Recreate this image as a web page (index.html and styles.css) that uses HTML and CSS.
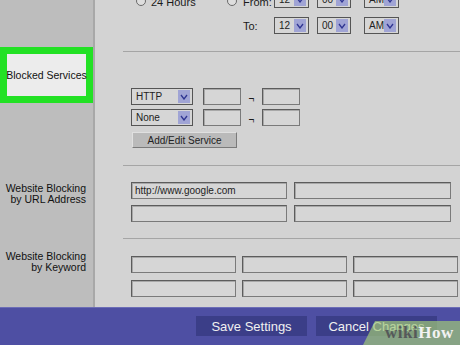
FILE: index.html
```html
<!DOCTYPE html>
<html lang="en">
<head>
  <meta charset="UTF-8" />
  <title>Access Restrictions</title>
  <link rel="stylesheet" href="styles.css">
</head>
<body>
  <div class="screen">
    <div class="content">
      <aside class="side">
        <div class="hl"><span>Blocked Services</span></div>
        <div class="lbl url">Website Blocking<br>by URL Address</div>
        <div class="lbl kw">Website Blocking<br>by Keyword</div>
      </aside>
      <main class="main">
        <section class="time">
          <div class="trow first">
            <span class="radio"></span>
            <span class="tl hours">24 Hours</span>
            <span class="radio"></span>
            <span class="tl from">From:</span>
            <div class="sel hh"><span>12</span><i class="dd"><svg width="8" height="6" viewBox="0 0 8 6"><polyline points="1,1 4,5 7,1" fill="none" stroke="#2f3591" stroke-width="1.3"/></svg></i></div>
            <div class="sel mm"><span>00</span><i class="dd"><svg width="8" height="6" viewBox="0 0 8 6"><polyline points="1,1 4,5 7,1" fill="none" stroke="#2f3591" stroke-width="1.3"/></svg></i></div>
            <div class="sel ap"><span>AM</span><i class="dd"><svg width="8" height="6" viewBox="0 0 8 6"><polyline points="1,1 4,5 7,1" fill="none" stroke="#2f3591" stroke-width="1.3"/></svg></i></div>
          </div>
          <div class="trow second">
            <span class="tl from">To:</span>
            <div class="sel hh"><span>12</span><i class="dd"><svg width="8" height="6" viewBox="0 0 8 6"><polyline points="1,1 4,5 7,1" fill="none" stroke="#2f3591" stroke-width="1.3"/></svg></i></div>
            <div class="sel mm"><span>00</span><i class="dd"><svg width="8" height="6" viewBox="0 0 8 6"><polyline points="1,1 4,5 7,1" fill="none" stroke="#2f3591" stroke-width="1.3"/></svg></i></div>
            <div class="sel ap"><span>AM</span><i class="dd"><svg width="8" height="6" viewBox="0 0 8 6"><polyline points="1,1 4,5 7,1" fill="none" stroke="#2f3591" stroke-width="1.3"/></svg></i></div>
          </div>
        </section>
        <div class="rule"></div>
        <section class="svc">
          <div class="srow">
            <div class="sel kind"><span>HTTP</span><i class="dd"><svg width="8" height="6" viewBox="0 0 8 6"><polyline points="1,1 4,5 7,1" fill="none" stroke="#2f3591" stroke-width="1.3"/></svg></i></div>
            <div class="box port"></div>
            <span class="sep">¬</span>
            <div class="box port2"></div>
          </div>
          <div class="srow">
            <div class="sel kind"><span>None</span><i class="dd"><svg width="8" height="6" viewBox="0 0 8 6"><polyline points="1,1 4,5 7,1" fill="none" stroke="#2f3591" stroke-width="1.3"/></svg></i></div>
            <div class="box port"></div>
            <span class="sep">¬</span>
            <div class="box port2"></div>
          </div>
          <button class="add">Add/Edit Service</button>
        </section>
        <div class="rule"></div>
        <section class="urls">
          <div class="box">http://www.google.com</div>
          <div class="box"></div>
          <div class="box"></div>
          <div class="box"></div>
        </section>
        <div class="rule"></div>
        <section class="kws">
          <div class="box"></div>
          <div class="box"></div>
          <div class="box"></div>
          <div class="box"></div>
          <div class="box"></div>
          <div class="box"></div>
        </section>
      </main>
    </div>
    <footer class="bar">
      <button class="btn save">Save Settings</button>
      <button class="btn cancel">Cancel Changes</button>
    </footer>
    <div class="wm"><span class="wiki">wiki</span><span class="how">How</span></div>
  </div>
</body>
</html>
```

FILE: styles.css
```css
* { box-sizing: border-box; }
html, body { height: 100%; margin: 0; }
body {
  font-family: "Liberation Sans", Arial, sans-serif;
  background: #d3d3d3;
  color: #1a1a1a;
  overflow: hidden;
}
.screen {
  width: 460px;
  height: 345px;
  display: flex;
  flex-direction: column;
  position: relative;
  overflow: hidden;
}
.content {
  display: flex;
  flex: 1;
  min-height: 0;
}
.side {
  width: 95px;
  background: #bdbdbd;
  border-right: 2px solid #a8a8a8;
  display: flex;
  flex-direction: column;
  font-size: 10.5px;
}
.hl {
  margin-top: 47px;
  height: 56px;
  border: 7px solid #22e124;
  background: #ececec;
  display: flex;
  align-items: center;
  justify-content: center;
  white-space: nowrap;
  color: #111;
}
.side .lbl {
  text-align: right;
  padding-right: 7px;
  line-height: 11px;
  color: #111;
}
.lbl.url { margin-top: 80px; }
.lbl.kw { margin-top: 46px; }

.main {
  flex: 1;
  display: flex;
  flex-direction: column;
  background: #d3d3d3;
}
.rule {
  height: 1px;
  background: #a5a5a5;
  margin-left: 28px;
}

/* time */
.time {
  margin-top: -9px;
  margin-bottom: 17px;
  display: flex;
  flex-direction: column;
  gap: 9px;
}
.trow {
  display: flex;
  align-items: center;
  height: 17px;
  font-size: 11px;
}
.trow.first { padding-left: 41px; }
.trow.first .tl { align-self: flex-end; line-height: 13px; margin-bottom: -1px; }
.trow.second { padding-left: 148px; }
.radio {
  width: 10px;
  height: 10px;
  border: 1px solid #6a6a6a;
  border-radius: 50%;
  background: #dedede;
  margin-top: 3px;
}
.tl.hours { margin-left: 5px; width: 76px; }
.radio + .tl.from { margin-left: 6px; }
.tl.from { width: 31px; }

.sel {
  display: flex;
  align-items: center;
  height: 17px;
  border: 1px solid #555;
  background: #d6d6d6;
  padding: 0 2px 0 4px;
  font-size: 10px;
  color: #222;
}
.sel span { flex: 1; }
.sel .dd {
  width: 12px;
  height: 13px;
  background: #a0a4d5;
  display: flex;
  align-items: center;
  justify-content: center;
}
.sel.hh { width: 35px; }
.sel.mm { width: 34px; margin-left: 8px; }
.sel.ap { width: 35px; margin-left: 13px; }

.box {
  height: 17px;
  border: 1px solid #5c5c5c;
  border-right-color: #7a7a7a;
  border-bottom-color: #7a7a7a;
  background: #d6d6d6;
  box-shadow: inset 1px 1px 0 #a8a8a8;
  font-size: 10px;
  color: #222;
  padding: 2px 3px;
  white-space: nowrap;
}

/* blocked services */
.svc {
  padding: 36px 0 0 36px;
  margin-bottom: 17px;
  display: flex;
  flex-direction: column;
  gap: 4px;
}
.srow {
  display: flex;
  align-items: center;
}
.sel.kind { width: 62px; }
.box.port { width: 38px; margin-left: 10px; }
.box.port2 { width: 38px; }
.sep {
  width: 21px;
  text-align: center;
  font-size: 10px;
  padding-top: 3px;
}
.add {
  margin: 2px 0 0 1px;
  width: 105px;
  height: 16px;
  padding: 0;
  font-family: inherit;
  font-size: 10px;
  color: #222;
  background: #bababa;
  border: 1px solid;
  border-color: #e0e0e0 #7a7a7a #7a7a7a #e0e0e0;
}

/* url blocking */
.urls {
  padding: 16px 0 0 36px;
  margin-bottom: 16px;
  display: grid;
  grid-template-columns: 156px 157px;
  column-gap: 7px;
  row-gap: 6px;
}

/* keyword blocking */
.kws {
  padding: 17px 0 0 36px;
  display: grid;
  grid-template-columns: repeat(3, 105px);
  column-gap: 6px;
  row-gap: 7px;
}

/* bottom bar */
.bar {
  height: 38px;
  background: #4e4fa3;
  border-top: 1px solid #6c6db6;
  display: flex;
  justify-content: flex-end;
  align-items: flex-start;
  gap: 9px;
  padding: 8px 23px 0 0;
}
.btn {
  height: 20px;
  padding: 0;
  border: none;
  background: #3b3e88;
  color: #f0f0f0;
  font-family: inherit;
  font-size: 13px;
}
.btn.save { width: 111px; }
.btn.cancel { width: 121px; }

/* watermark */
.wm {
  position: absolute;
  right: 0;
  bottom: 0;
  width: 97px;
  height: 24px;
  clip-path: polygon(12px 0, 100% 0, 100% 100%, 0 100%);
  background: rgba(160, 200, 120, 0.7);
  font-family: "Liberation Serif", serif;
  font-weight: bold;
  font-size: 17px;
  letter-spacing: 0.5px;
  padding: 2px 0 0 22px;
}
.wm .wiki { color: #55595a; }
.wm .how { color: #f2f2f2; }
```
